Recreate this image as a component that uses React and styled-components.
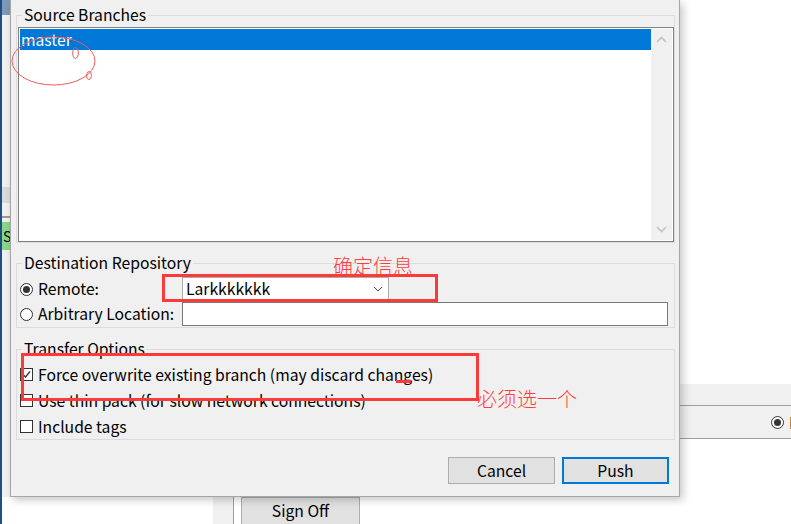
import React from "react";
import styled, { createGlobalStyle } from "styled-components";

const UI_FONT = `"Noto Sans CJK SC", "Noto Sans", sans-serif`;
const UI_SIZE = "15.7px";

const Global = createGlobalStyle`
  html, body {
    margin: 0;
    padding: 0;
    background: #ffffff;
  }
  body {
    font-family: ${UI_FONT};
    font-size: ${UI_SIZE};
    color: #000;
  }
`;

const Desktop = styled.div`
  position: relative;
  width: 791px;
  height: 524px;
  overflow: hidden;
  background: #ffffff;
`;

/* ---------- windows behind the dialog ---------- */

const LeftWindow = styled.div`
  position: absolute;
  left: 0;
  top: 0;
  width: 10px;
  height: 524px;
  display: flex;
  flex-direction: column;
  border-left: 2px solid #1d4f84;
  box-sizing: border-box;
  background: #f0f0f0;
`;

const Strip = styled.div`
  height: ${({ h }) => h}px;
  flex: ${({ grow }) => (grow ? 1 : "none")};
  background: ${({ bg }) => bg};
  font-size: 14px;
  line-height: 28px;
  overflow: hidden;
  padding-left: 1px;
`;

const RightWindow = styled.div`
  position: absolute;
  left: 680px;
  top: 384px;
  width: 111px;
  display: flex;
  flex-direction: column;
`;

const RightBand = styled.div`
  height: ${({ h }) => h}px;
  background: #f0f0f0;
  border-bottom: 1px solid #a0a0a0;
  display: flex;
  align-items: center;
  gap: 5px;
  padding-left: 91px;
  overflow: hidden;
  white-space: nowrap;
`;

const BottomWindow = styled.div`
  position: absolute;
  left: 213px;
  top: 497px;
  display: flex;
  height: 27px;
`;

const BottomGutter = styled.div`
  width: 20px;
  background: #f0f0f0;
  border-right: 1px solid #a0a0a0;
`;

const BottomGap = styled.div`
  width: 7px;
  background: #fff;
`;

/* ---------- dialog ---------- */

const Dialog = styled.div`
  position: absolute;
  left: 10px;
  top: 0;
  width: 670px;
  height: 497px;
  box-sizing: border-box;
  background: #f0f0f0;
  border: 1px solid #a6a6a6;
  border-top: none;
  box-shadow: 3px 3px 8px rgba(0, 0, 0, 0.22);
  padding: 5px 4px 12px 5px;
  display: flex;
  flex-direction: column;
`;

const Group = styled.fieldset`
  margin: ${({ mt }) => mt || 0}px 0 0 0;
  padding: ${({ pad }) => pad};
  border: 1px solid #dcdcdc;
  min-width: 0;
`;

const Caption = styled.legend`
  margin-left: 5px;
  padding: 0 2px;
  font-size: ${UI_SIZE};
  line-height: 20px;
  color: #000;
`;

const ListBox = styled.div`
  height: 215px;
  margin-left: 1px;
  box-sizing: border-box;
  border: 1px solid #828282;
  padding: 1px;
  background: #fff;
  display: flex;
`;

const Items = styled.div`
  flex: 1;
`;

const Item = styled.div`
  height: 21px;
  line-height: 21px;
  padding-left: 1px;
  background: ${({ selected }) => (selected ? "#0078d7" : "transparent")};
  color: ${({ selected }) => (selected ? "#fff" : "#000")};
`;

const ScrollBar = styled.div`
  width: 21px;
  background: #f0f0f0;
  display: flex;
  flex-direction: column;
  justify-content: space-between;
  align-items: center;
  padding: 7px 0;
`;

const FormGrid = styled.div`
  display: grid;
  grid-template-columns: 162px 1fr;
  row-gap: 1px;
  padding: 4px 6px 1px 3px;
  align-items: center;
`;

const RadioLabel = styled.label`
  display: flex;
  align-items: center;
  gap: 5px;
  white-space: nowrap;
  line-height: 24px;
`;

const RadioDot = styled.span`
  width: 13px;
  height: 13px;
  box-sizing: border-box;
  border-radius: 50%;
  border: 1px solid #333;
  background: #fff;
  display: inline-flex;
  align-items: center;
  justify-content: center;
  flex: none;

  &::after {
    content: "";
    width: 7px;
    height: 7px;
    border-radius: 50%;
    background: ${({ checked }) => (checked ? "#333" : "transparent")};
  }
`;

const Combo = styled.div`
  width: 207px;
  height: 24px;
  box-sizing: border-box;
  border: 1px solid #acacac;
  background: #fff;
  display: flex;
  align-items: center;
  justify-content: space-between;
  padding: 0 5px 0 3px;
  line-height: 22px;
`;

const TextBox = styled.div`
  height: 24px;
  box-sizing: border-box;
  border: 1px solid #7a7a7a;
  background: #fff;
`;

const Options = styled.div`
  padding: 2px 0 0 3px;
  display: flex;
  flex-direction: column;
`;

const CheckRow = styled.label`
  display: flex;
  align-items: center;
  gap: 5px;
  height: 26px;
  white-space: nowrap;
`;

const CheckBox = styled.span`
  width: 13px;
  height: 13px;
  box-sizing: border-box;
  border: 1px solid #333;
  background: #fff;
  display: inline-flex;
  align-items: center;
  justify-content: center;
  flex: none;
`;

const ButtonRow = styled.div`
  margin-top: 17px;
  display: flex;
  justify-content: flex-end;
  gap: 7px;
  padding-right: 6px;
`;

const Button = styled.button`
  width: ${({ w }) => w || 107}px;
  height: ${({ h }) => h || 27}px;
  box-sizing: border-box;
  font-family: ${UI_FONT};
  font-size: ${UI_SIZE};
  line-height: 1;
  color: #000;
  background: #e1e1e1;
  border: ${({ primary }) =>
    primary ? "2px solid #0078d7" : "1px solid #adadad"};
  padding: 0;
`;

/* ---------- red annotations drawn over the screenshot ---------- */

const RedBox = styled.div`
  position: absolute;
  left: ${({ x }) => x}px;
  top: ${({ y }) => y}px;
  width: ${({ w }) => w}px;
  height: ${({ h }) => h}px;
  box-sizing: border-box;
  border: 3px solid #fc3a3a;
`;

const RedBar = styled.div`
  position: absolute;
  left: 396px;
  top: 380px;
  width: 15px;
  height: 3px;
  background: #fc3a3a;
`;

const RedNote = styled.div`
  position: absolute;
  left: ${({ x }) => x}px;
  top: ${({ y }) => y}px;
  font-family: "Noto Sans CJK SC", sans-serif;
  font-weight: 300;
  font-size: ${({ size }) => size}px;
  line-height: 1;
  color: #ff3d3d;
  white-space: nowrap;
`;

const Scribble = styled.svg`
  position: absolute;
  left: 0;
  top: 0;
`;

const Chevron = ({ up }) => (
  <svg width="11" height="7" viewBox="0 0 11 7">
    <path
      d={up ? "M1 6 L5.5 1.5 L10 6" : "M1 1 L5.5 5.5 L10 1"}
      fill="none"
      stroke="#c2c2c2"
      strokeWidth="1.6"
    />
  </svg>
);

const ComboArrow = () => (
  <svg width="10" height="6" viewBox="0 0 10 6">
    <path d="M1 1 L5 5 L9 1" fill="none" stroke="#444" strokeWidth="1" />
  </svg>
);

const Tick = () => (
  <svg width="11" height="11" viewBox="0 0 11 11">
    <path d="M2 5.5 L4.5 8 L9 2.5" fill="none" stroke="#333" strokeWidth="1.3" />
  </svg>
);

export default function App() {
  return (
    <Desktop>
      <Global />

      <LeftWindow>
        <Strip h={15} bg="#7d98b8" />
        <Strip h={172} bg="#f0f0f0" />
        <Strip h={16} bg="#dadada" />
        <Strip h={13} bg="#f0f0f0" />
        <Strip h={2} bg="#9a9a9a" />
        <Strip h={4} bg="#f0f0f0" />
        <Strip h={28} bg="#86d886">S</Strip>
        <Strip h={247} bg="#f0f0f0" />
        <Strip grow bg="#ffffff" />
      </LeftWindow>

      <RightWindow>
        <RightBand h={21} />
        <RightBand h={32}>
          <RadioDot checked />
          <span>D</span>
        </RightBand>
      </RightWindow>

      <BottomWindow>
        <BottomGutter />
        <BottomGap />
        <Button w={119} h={28}>
          Sign Off
        </Button>
      </BottomWindow>

      <Dialog>
        <Group pad="2px 0 0 0">
          <Caption>Source Branches</Caption>
          <ListBox>
            <Items>
              <Item selected>master</Item>
            </Items>
            <ScrollBar>
              <Chevron up />
              <Chevron />
            </ScrollBar>
          </ListBox>
        </Group>

        <Group mt={10} pad="0">
          <Caption>Destination Repository</Caption>
          <FormGrid>
            <RadioLabel>
              <RadioDot checked />
              Remote:
            </RadioLabel>
            <Combo>
              <span>Larkkkkkkk</span>
              <ComboArrow />
            </Combo>
            <RadioLabel>
              <RadioDot />
              Arbitrary Location:
            </RadioLabel>
            <TextBox />
          </FormGrid>
        </Group>

        <Group mt={11} pad="0">
          <Caption>Transfer Options</Caption>
          <Options>
            <CheckRow>
              <CheckBox>
                <Tick />
              </CheckBox>
              Force overwrite existing branch (may discard changes)
            </CheckRow>
            <CheckRow>
              <CheckBox />
              Use thin pack (for slow network connections)
            </CheckRow>
            <CheckRow>
              <CheckBox />
              Include tags
            </CheckRow>
          </Options>
        </Group>

        <ButtonRow>
          <Button>Cancel</Button>
          <Button primary>Push</Button>
        </ButtonRow>
      </Dialog>

      <Scribble width="120" height="100" viewBox="0 0 120 100">
        <ellipse cx="53.5" cy="61" rx="41.5" ry="24" fill="none" stroke="#f25a5a" strokeWidth="1" />
        <ellipse cx="75.5" cy="53" rx="2.8" ry="5.5" fill="none" stroke="#f25a5a" strokeWidth="1" />
        <ellipse cx="89" cy="75.5" rx="2.5" ry="4" fill="none" stroke="#f25a5a" strokeWidth="1" />
      </Scribble>

      <RedBox x={162} y={274} w={276} h={28} />
      <RedNote x={333} y={256} size={20}>
        确定信息
      </RedNote>

      <RedBox x={21} y={353} w={458} h={48} />
      <RedBar />
      <RedNote x={477} y={389} size={20}>
        必须选一个
      </RedNote>
    </Desktop>
  );
}
